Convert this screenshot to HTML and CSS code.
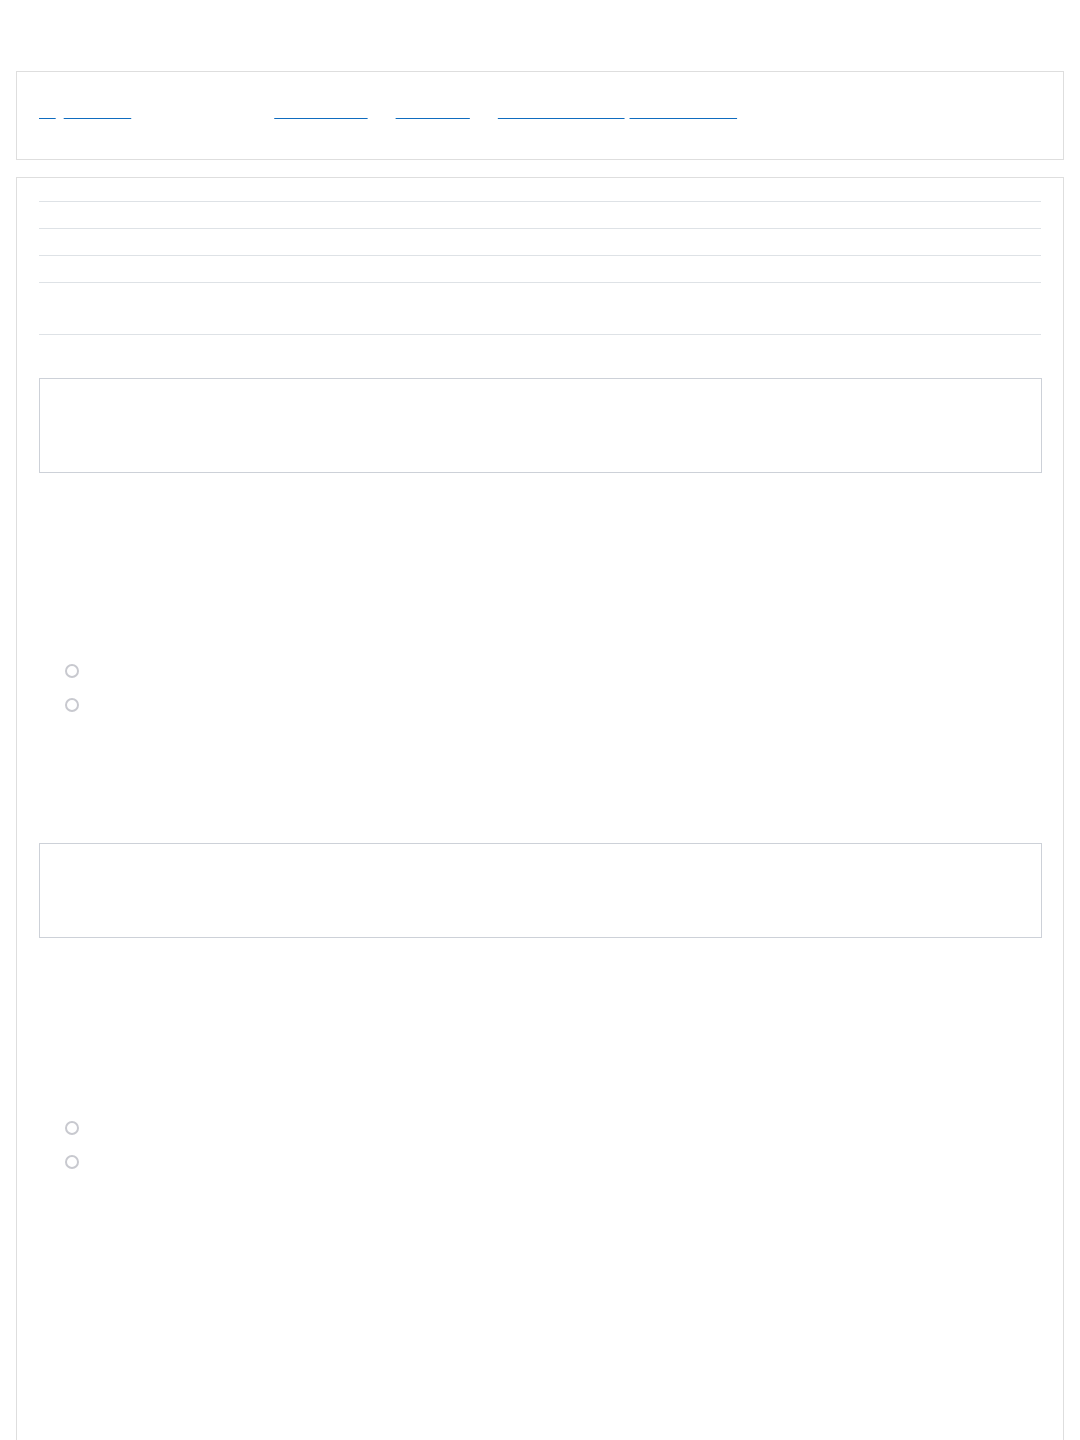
FILE: index.html
```html
<!DOCTYPE html>
<html>
<head>
	<title>Quiz: Trigonometry - Review</title>
	<link rel="stylesheet" href="styles.css">
</head>
<body>
	<header class="page-header">
		<h1>Mathematics I</h1>
	</header>

	<div class="crumbs-box">
		<nav class="crumbs">
			<a class="home" href="#">12</a>
			<a href="#">Site home</a>
			<span class="sep">›</span>
			<span>Your courses</span>
			<span class="sep">›</span>
			<a href="#">Mathematics I</a>
			<span class="sep">›</span>
			<a href="#">Chapter 12</a>
			<span class="sep">›</span>
			<a href="#">Quiz: Trigonometry</a>
			<a class="pair" href="#">Grade summary</a>
		</nav>
	</div>

	<div class="main">
		<table class="summary">
			<tr><th>Started on</th><td>Monday, 6 May 2024, 9:12 AM</td></tr>
			<tr><th>State</th><td>Finished</td></tr>
			<tr><th>Completed on</th><td>Monday, 6 May 2024, 9:31 AM</td></tr>
			<tr class="last"><th>Grade</th><td>2.00 out of 2.00 (100%)<br>Well done!</td></tr>
		</table>

		<!-- question 1 -->
		<div class="question">
			<div class="info">
				<div>Question 1</div>
				<div>Correct</div>
				<div>Mark 1.00 out of 1.00</div>
			</div>
			<div class="formulation">
				<div class="qtext">
					<p>A right triangle has legs of length 3 and 4.<br>The angle θ lies opposite the side of length 3.<br>No calculator is needed for this question.</p>
					<p>Is the following statement true or false?<br>sin θ = 3/5</p>
				</div>
				<div class="prompt">Select one:</div>
				<div class="answer">
					<label class="option"><input type="radio" name="q1" value="1"> True</label>
					<label class="option"><input type="radio" name="q1" value="0"> False</label>
				</div>
			</div>
			<div class="outcome">
				<p>Your answer is correct.</p>
				<p>The correct answer is 'True'.</p>
			</div>
		</div>

		<!-- question 2 -->
		<div class="question">
			<div class="info">
				<div>Question 2</div>
				<div>Correct</div>
				<div>Mark 1.00 out of 1.00</div>
			</div>
			<div class="formulation">
				<div class="qtext">
					<p>The angle φ is measured in radians.<br>It lies between 0 and π/2.<br>We know that tan φ = 1.<br>Is the following statement true or false?<br>φ = π/4</p>
				</div>
				<div class="prompt">Select one:</div>
				<div class="answer">
					<label class="option"><input type="radio" name="q2" value="1"> True</label>
					<label class="option"><input type="radio" name="q2" value="0"> False</label>
				</div>
			</div>
			<div class="outcome">
				<p>Your answer is correct.</p>
				<p>tan φ = sin φ / cos φ, so tan φ = 1 means sin φ = cos φ.</p>
				<p>On the interval from 0 to π/2 this happens only once.</p>
				<p>Both values are then equal to √2/2.</p>
				<p>That point is exactly half of the right angle.</p>
				<p>So φ = π/4, which is 45 degrees.</p>
				<p>Remember the unit circle when solving such questions.</p>
				<p>The correct answer is 'True'.</p>
			</div>
		</div>
	</div>
</body>
</html>
```

FILE: styles.css
```css
body {
	margin: 0;
	padding: 0 16px;
	font-family: "Liberation Sans", Arial, sans-serif;
	font-size: 15px;
	color: #fff;
	background: #fff;
}
.page-header h1 {
	margin: 0;
	padding: 20px 0 21px;
	font-size: 24px;
	line-height: 30px;
	font-weight: normal;
}

/* breadcrumb box */
.crumbs-box {
	border: 1px solid #dedede;
	padding: 28px 22px 36px;
	line-height: 23px;
}
.crumbs {
	display: flex;
	align-items: baseline;
}
.crumbs a {
	color: transparent;
	text-decoration: underline;
	text-decoration-color: #0f6cbf;
	text-decoration-skip-ink: none;
}
.crumbs .home {
	margin-right: 8px;
}
.crumbs .sep {
	margin: 0 11.5px;
}
.crumbs .pair {
	margin-left: 5px;
	padding-right: 4px;
}

/* main panel */
.main {
	margin-top: 17px;
	border: 1px solid #dedede;
	padding: 23px 22px 23px;
}
.summary {
	width: 100%;
	border-collapse: separate;
	border-spacing: 0;
}
.summary th,
.summary td {
	border-top: 1px solid #dee2e6;
	padding: 3px 8px;
	line-height: 20px;
	text-align: left;
	font-weight: normal;
}
.summary th {
	width: 160px;
}
.summary .last th,
.summary .last td {
	border-bottom: 1px solid #dee2e6;
	line-height: 22.5px;
}

/* questions */
.question {
	margin-top: 43px;
}
.info {
	margin-right: -1px;
	border: 1px solid #cdd1d8;
	padding: 15px 16px;
	line-height: 21px;
}
.formulation {
	padding-top: 24px;
}
.qtext p {
	margin: 0;
	line-height: 20px;
}
.qtext p + p {
	margin-top: 8px;
}
.prompt {
	margin: 16px 0 9px;
	line-height: 24px;
}
.answer {
	padding-left: 26px;
}
.option {
	display: flex;
	align-items: center;
	gap: 8px;
	height: 34px;
}
.option input[type="radio"] {
	appearance: none;
	margin: 0;
	width: 14px;
	height: 14px;
	border: 2px solid #c8c9cf;
	border-radius: 50%;
	background: #fff;
}
.outcome {
	padding: 16px 0 14px;
}
.outcome p {
	margin: 0;
	line-height: 20px;
}
.outcome p + p {
	margin-top: 8px;
}
```
